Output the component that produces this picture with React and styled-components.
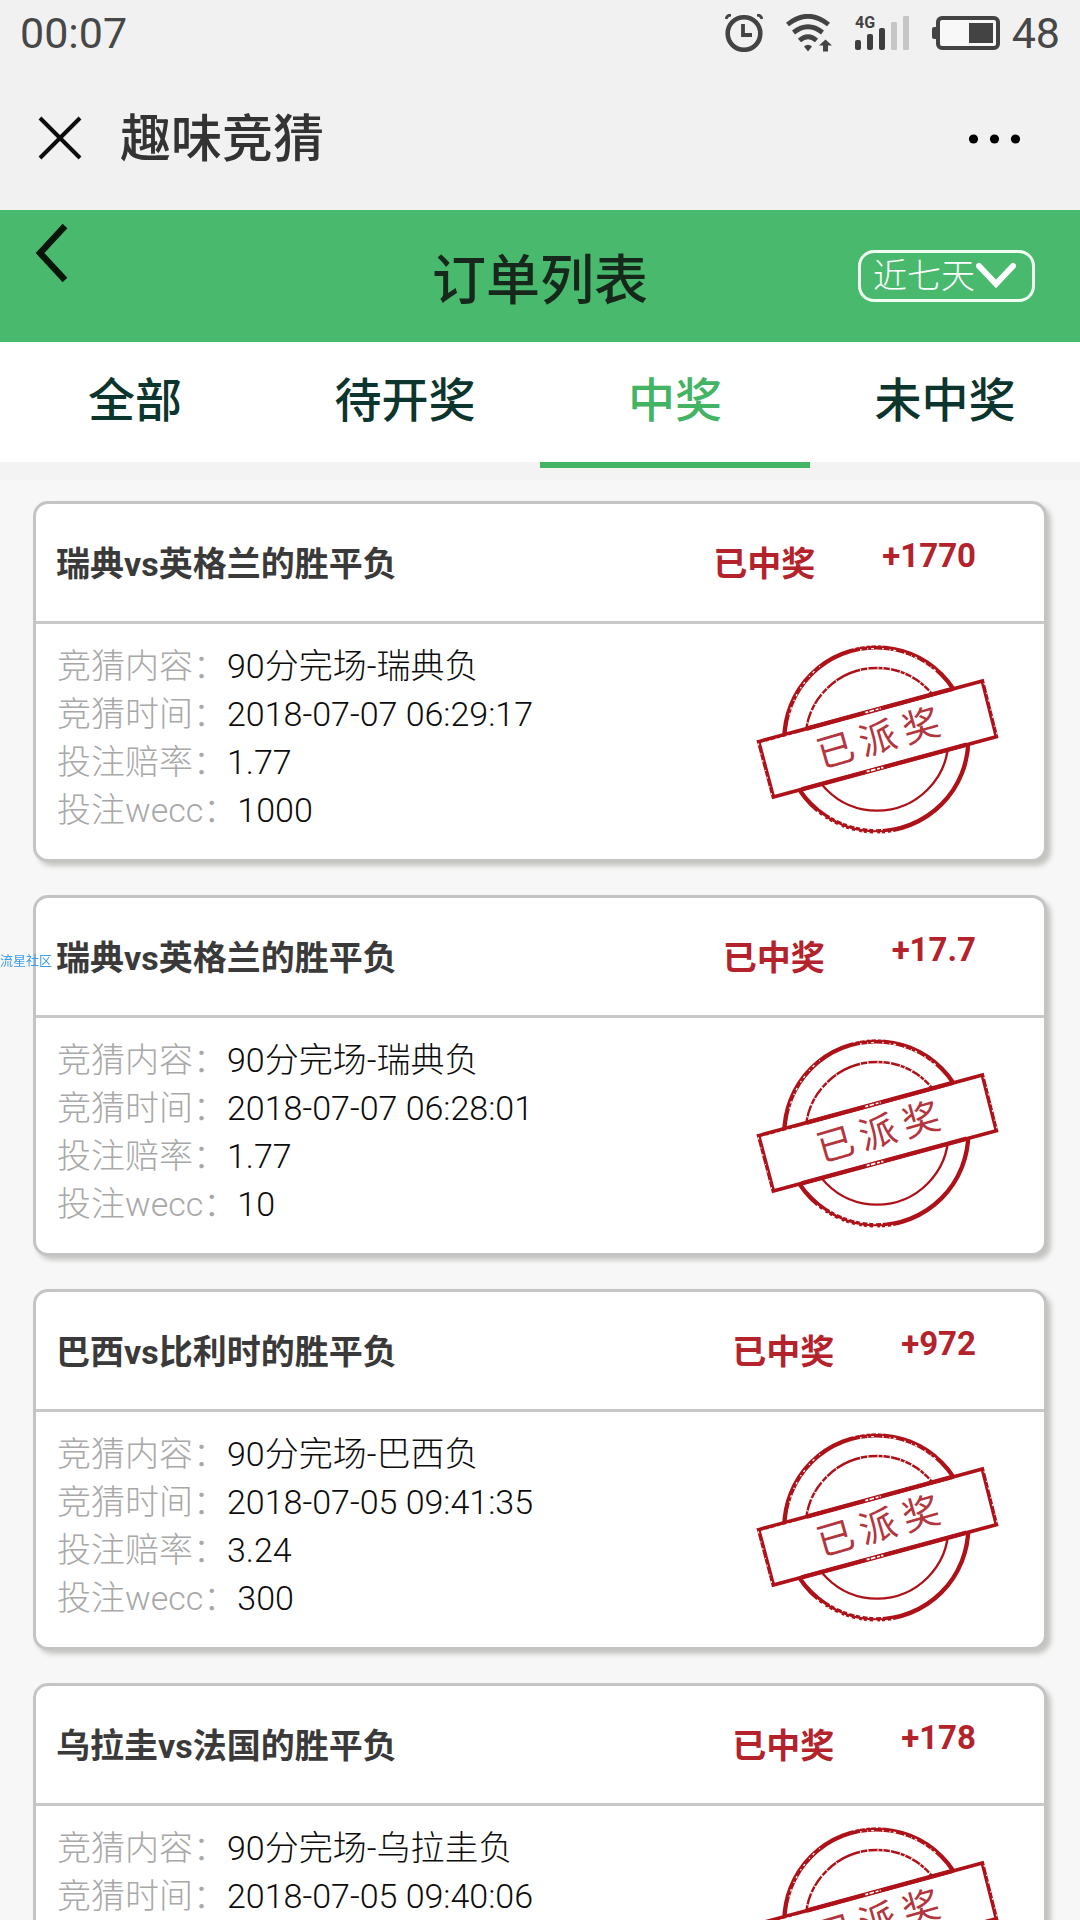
import React from "react";
import styled, { createGlobalStyle } from "styled-components";

const GlobalStyle = createGlobalStyle`
  * { box-sizing: border-box; }
  body {
    margin: 0;
    background: #f7f7f7;
    font-family: Roboto, "Noto Sans CJK SC", sans-serif;
  }
  button, select { font-family: inherit; }
`;

const Screen = styled.div`
  display: flex;
  flex-direction: column;
  height: 100vh;
  overflow: hidden;
`;

const StatusBar = styled.div`
  display: flex;
  align-items: center;
  justify-content: space-between;
  height: 66px;
  padding: 0 20px;
  background: #f1f1f1;
  color: #474747;
  font-size: 43px;
  line-height: 66px;
`;

const StatusIcons = styled.div`
  display: flex;
  align-items: center;
  gap: 23px;
`;

const Battery = styled.div`
  display: flex;
  align-items: center;
  gap: 12px;
`;

const NavBar = styled.div`
  display: flex;
  align-items: center;
  height: 144px;
  padding: 0 56px 0 36px;
  background: #f1f1f1;
`;

const IconButton = styled.button`
  display: flex;
  padding: 0;
  border: 0;
  background: none;
  cursor: pointer;
`;

const NavTitle = styled.h1`
  flex: 1;
  margin: 0 0 0 36px;
  padding-top: 4px;
  color: #333;
  font-size: 51px;
  font-weight: 500;
  line-height: 72px;
`;

const Header = styled.header`
  display: grid;
  grid-template-columns: 1fr auto 1fr;
  align-items: center;
  height: 132px;
  padding: 0 45px;
  background: #49ba6d;
`;

const BackButton = styled(IconButton)`
  align-self: start;
  justify-self: start;
  margin-left: -12px;
  padding-top: 12px;
`;

const HeaderTitle = styled.h2`
  margin: 0;
  padding-top: 12px;
  color: #16281b;
  font-size: 54px;
  font-weight: 500;
  line-height: 72px;
`;

const RangePicker = styled.label`
  display: flex;
  align-items: center;
  justify-self: end;
  height: 52px;
  padding: 0 15px 0 12px;
  border: 3px solid #f2fff5;
  border-radius: 16px;
`;

const RangeSelect = styled.select`
  appearance: none;
  padding: 0;
  border: 0;
  background: none;
  color: #fff;
  font-size: 34px;
  font-weight: 300;
  line-height: 44px;
`;

const Tabs = styled.nav`
  position: relative;
  z-index: 1;
  display: flex;
  height: 120px;
  background: #fff;
`;

const Tab = styled.a`
  flex: 1;
  height: ${(p) => (p.$active ? "126px" : "120px")};
  padding-top: 24px;
  border-bottom: ${(p) => (p.$active ? "6px solid #43b364" : "0")};
  color: ${(p) => (p.$active ? "#43b364" : "#0b352d")};
  font-size: 47px;
  font-weight: 500;
  line-height: 70px;
  text-align: center;
  text-decoration: none;
`;

const List = styled.main`
  display: flex;
  flex: 1;
  flex-direction: column;
  gap: 33px;
  min-height: 0;
  padding: 39px 33px 33px;
  overflow-y: auto;
  scrollbar-width: none;
  background: linear-gradient(#f3f3f3 18px, #f7f7f7 18px);
`;

const Card = styled.article`
  flex: none;
  border: 3px solid #c4c4c4;
  border-radius: 15px;
  background: #fff;
  box-shadow: 4px 4px 5px #c4c4c0;
`;

const CardHead = styled.div`
  display: flex;
  align-items: center;
  height: 120px;
  padding: 2px 68px 0 20px;
  border-bottom: 3px solid #c8c8c8;
  color: #b4222b;
  font-size: 34px;
  font-weight: 700;
  line-height: 48px;
`;

const CardTitle = styled.h3`
  flex: 1;
  margin: 0;
  color: #3a3a3a;
  font-size: 34px;
  font-weight: 700;
`;

const Amount = styled.span`
  margin-left: 67px;
  padding-bottom: 16px;
  font-size: 33px;
`;

const CardBody = styled.div`
  display: flex;
  align-items: flex-start;
  justify-content: space-between;
  min-height: 235px;
  padding: 18px 44px 20px 21px;
`;

const Details = styled.dl`
  margin: 0;
  font-size: 34px;
  font-weight: 300;
  line-height: 48px;
`;

const Detail = styled.div`
  display: flex;
`;

const Term = styled.dt`
  color: #a8a8a8;
`;

const Value = styled.dd`
  margin: 0;
  color: #0c0c0c;
`;

const Watermark = styled.span`
  position: fixed;
  top: 50%;
  left: 0;
  color: #3b9fea;
  font-size: 13px;
  line-height: 2px;
`;

const AlarmIcon = () => (
  <svg width="38" height="38" viewBox="0 0 38 38" fill="none" stroke="#434343" aria-hidden="true">
    <circle cx="19" cy="19.500" r="16.300" strokeWidth="4.600" />
    <path d="M18 10v11h9" strokeWidth="3.800" />
    <path d="M1 5q1-4 5-4M37 5q-1-4-5-4" strokeWidth="2.800" />
  </svg>
);

const WifiIcon = () => (
  <svg width="46" height="38" viewBox="0 0 46 38" fill="none" stroke="#434343" aria-hidden="true">
    <path d="M1.500 10.500Q22 -6 42.500 10.500" strokeWidth="4.800" />
    <path d="M7.500 18.500Q22 7 36.500 18.500" strokeWidth="4.800" />
    <path d="M13.500 26.500Q22 19 30.500 26.500" strokeWidth="4.800" />
    <path d="M18 32.500q4-3.500 8 0l-4 5z" fill="#434343" stroke="none" />
    <path d="M39.500 25.500l6.500 6h-4v6h-5v-6h-4z" fill="#434343" stroke="none" />
  </svg>
);

const SignalIcon = () => (
  <svg width="54" height="46" viewBox="0 -5 54 46" aria-hidden="true">
    <text x="0" y="13" fontSize="16" fontWeight="700" fontFamily="Roboto, sans-serif" fill="#434343">4G</text>
    <g fill="#3e3e3e">
      <rect x="0" y="25" width="6" height="10" rx="2" />
      <rect x="12" y="19" width="6" height="16" rx="2" />
      <rect x="24" y="13" width="6" height="22" rx="2" />
    </g>
    <g fill="#c6c6c6">
      <rect x="36" y="7" width="6" height="28" rx="1" />
      <rect x="48" y="1" width="6" height="34" rx="1" />
    </g>
  </svg>
);

const BatteryIcon = () => (
  <svg width="68" height="34" viewBox="0 0 68 34" aria-hidden="true">
    <rect x="0" y="11" width="6" height="12" rx="2" fill="#434343" />
    <rect x="6" y="2" width="60" height="30" rx="4" fill="#f8f8f8" stroke="#434343" strokeWidth="4" />
    <rect x="37" y="7" width="24" height="20" fill="#434343" />
  </svg>
);

const CloseIcon = () => (
  <svg width="48" height="48" viewBox="0 0 48 48" fill="none" stroke="#0c0c0c" strokeWidth="4" aria-hidden="true">
    <path d="M4 4l40 40M44 4L4 44" />
  </svg>
);

const MoreIcon = () => (
  <svg width="57" height="12" viewBox="0 0 57 12" fill="#000" aria-hidden="true">
    <circle cx="6.500" cy="7" r="4.600" />
    <circle cx="27.500" cy="7" r="4.600" />
    <circle cx="48.500" cy="7" r="4.600" />
  </svg>
);

const BackIcon = () => (
  <svg width="36" height="62" viewBox="0 0 36 62" fill="none" stroke="#07150a" strokeWidth="6.400" aria-hidden="true">
    <path d="M32 4L7 31l25 27" />
  </svg>
);

const DownIcon = () => (
  <svg width="42" height="28" viewBox="0 0 42 28" fill="none" stroke="#fff" strokeWidth="6" strokeLinecap="round" aria-hidden="true">
    <path d="M4 4l17 18L38 4" />
  </svg>
);

const StampSeal = () => (
  <svg width="245" height="193" viewBox="105 67 735 579" fill="none" stroke="#ae1117" role="img" aria-label="已派奖">
    <circle cx="469" cy="359" r="276" strokeWidth="13" />
    <circle cx="471" cy="359" r="214" strokeWidth="7" />
    <g stroke="#fff">
      <path d="M420 91A272 272 0 0 1 655 161" strokeWidth="4" strokeDasharray="5 17 3 9 8 25" />
      <path d="M400 85A281 281 0 0 1 500 79" strokeWidth="4" strokeDasharray="6 11 3 14" />
      <path d="M208 285A270 270 0 0 1 300 140" strokeWidth="4" strokeDasharray="4 12 7 20" />
      <path d="M290 576A281 281 0 0 0 520 636" strokeWidth="5" strokeDasharray="9 10 13 8 6 9" />
      <path d="M330 590A270 270 0 0 0 500 628" strokeWidth="5" strokeDasharray="5 12 8 15" />
      <path d="M420 151A214 214 0 0 1 640 228" strokeWidth="8" strokeDasharray="3 19 4 27 3 12" />
      <path d="M262 311A214 214 0 0 1 350 182" strokeWidth="8" strokeDasharray="3 34 5 18" />
    </g>
    <path d="M116 366L787 184L829 351L160 532Z" fill="#fff" strokeWidth="11" />
    <path d="M260 327L700 207M245 509L740 375" strokeWidth="13" />
    <g stroke="#fff">
      <path d="M112 374L230 341" strokeWidth="3" strokeDasharray="5 13 8 10" />
      <path d="M436 279L482 266M440 456L490 443" strokeWidth="5" strokeDasharray="9 4 14 5" />
      <path d="M115 372L156 530M792 190L831 345" strokeWidth="3" strokeDasharray="6 24 4 17" />
    </g>
    <text
      transform="translate(346 390) rotate(-16)"
      x="0 132 267"
      y="42"
      textAnchor="middle"
      fontFamily="'Noto Sans CJK SC', sans-serif"
      fontSize="112"
      fill="#b3363e"
      stroke="none"
    >
      已派奖
    </text>
  </svg>
);

const tabs = ["全部", "待开奖", "中奖", "未中奖"];

const orders = [
  { id: 1, title: "瑞典vs英格兰的胜平负", amount: "+1770", pick: "90分完场-瑞典负", time: "2018-07-07 06:29:17", odds: "1.77", stake: "1000" },
  { id: 2, title: "瑞典vs英格兰的胜平负", amount: "+17.7", pick: "90分完场-瑞典负", time: "2018-07-07 06:28:01", odds: "1.77", stake: "10" },
  { id: 3, title: "巴西vs比利时的胜平负", amount: "+972", pick: "90分完场-巴西负", time: "2018-07-05 09:41:35", odds: "3.24", stake: "300" },
  { id: 4, title: "乌拉圭vs法国的胜平负", amount: "+178", pick: "90分完场-乌拉圭负", time: "2018-07-05 09:40:06" },
];

function OrderRow({ label, value }) {
  if (!value) return null;
  return (
    <Detail>
      <Term>{label}：</Term>
      <Value>{value}</Value>
    </Detail>
  );
}

function OrderCard({ order }) {
  return (
    <Card>
      <CardHead>
        <CardTitle>{order.title}</CardTitle>
        <span>已中奖</span>
        <Amount>{order.amount}</Amount>
      </CardHead>
      <CardBody>
        <Details>
          <OrderRow label="竞猜内容" value={order.pick} />
          <OrderRow label="竞猜时间" value={order.time} />
          <OrderRow label="投注赔率" value={order.odds} />
          <OrderRow label="投注wecc" value={order.stake} />
        </Details>
        <StampSeal />
      </CardBody>
    </Card>
  );
}

export default function App() {
  return (
    <>
      <GlobalStyle />
      <Screen>
        <StatusBar>
          <span>00:07</span>
          <StatusIcons>
            <AlarmIcon />
            <WifiIcon />
            <SignalIcon />
            <Battery>
              <BatteryIcon />
              <span>48</span>
            </Battery>
          </StatusIcons>
        </StatusBar>
        <NavBar>
          <IconButton type="button" aria-label="关闭"><CloseIcon /></IconButton>
          <NavTitle>趣味竞猜</NavTitle>
          <IconButton type="button" aria-label="更多"><MoreIcon /></IconButton>
        </NavBar>
        <Header>
          <BackButton type="button" aria-label="返回"><BackIcon /></BackButton>
          <HeaderTitle>订单列表</HeaderTitle>
          <RangePicker>
            <RangeSelect aria-label="时间范围" defaultValue="7">
              <option value="7">近七天</option>
            </RangeSelect>
            <DownIcon />
          </RangePicker>
        </Header>
        <Tabs>
          {tabs.map((name) => (
            <Tab key={name} href="#" $active={name === "中奖"}>{name}</Tab>
          ))}
        </Tabs>
        <List>
          {orders.map((order) => (
            <OrderCard key={order.id} order={order} />
          ))}
        </List>
      </Screen>
      <Watermark>流星社区</Watermark>
    </>
  );
}
